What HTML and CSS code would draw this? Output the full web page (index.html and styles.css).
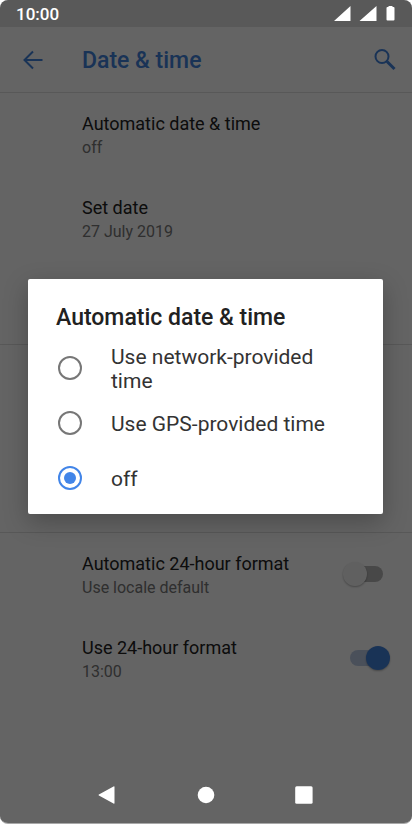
FILE: index.html
```html
<!DOCTYPE html>
<html lang="en">
<head>
<meta charset="utf-8">
<meta name="viewport" content="width=device-width, initial-scale=1">
<title>Date &amp; time</title>
<link rel="stylesheet" href="styles.css">
</head>
<body>
<div class="screen">
  <header class="status">
    <time class="clock">10:00</time>
    <svg class="signals" viewBox="0 0 62 16" aria-hidden="true">
      <path d="M0 15 16.500 0v15zM25.500 15 42.500 0v15z"/>
      <path d="M54.500 0h4v1h1q1 0 1 1v11.500q0 1-1 1h-6q-1 0-1-1V2q0-1 1-1h1z"/>
    </svg>
  </header>

  <main class="settings">
    <div class="appbar">
      <button class="icon-button" type="button" aria-label="Back">
        <svg class="icon" viewBox="0 0 24 24"><path d="M21.500 12H3.500M12 3.500 3.500 12l8.500 8.500"/></svg>
      </button>
      <h1 class="title">Date &amp; time</h1>
      <button class="icon-button" type="button" aria-label="Search">
        <svg class="icon" viewBox="0 0 24 24"><circle cx="9" cy="8.500" r="6.500"/><path class="handle" d="m14 13.500 7.500 7.500"/></svg>
      </button>
    </div>

    <section class="group group-first">
      <div class="row"><div class="text"><span class="name">Automatic date &amp; time</span><span class="value">off</span></div></div>
      <div class="row"><div class="text"><span class="name">Set date</span><span class="value">27 July 2019</span></div></div>
    </section>
    <section class="group group-zone"></section>
    <section class="group">
      <label class="row">
        <span class="text"><span class="name">Automatic 24-hour format</span><span class="value">Use locale default</span></span>
        <input class="switch" type="checkbox" role="switch">
      </label>
      <label class="row">
        <span class="text"><span class="name">Use 24-hour format</span><span class="value">13:00</span></span>
        <input class="switch" type="checkbox" role="switch" checked>
      </label>
    </section>
  </main>

  <nav class="navbar">
    <button class="nav-button" type="button" aria-label="Back"><svg viewBox="0 0 20 20"><path d="M16.500 2v16q0 1.200-1 .6L.9 10.600q-.9-.6 0-1.200L15.500 1.400q1-.6 1 .6z"/></svg></button>
    <button class="nav-button" type="button" aria-label="Home"><svg viewBox="0 0 20 20"><circle cx="10" cy="10" r="8.300"/></svg></button>
    <button class="nav-button" type="button" aria-label="Recent apps"><svg viewBox="0 0 20 20"><rect x="1.200" y="1.300" width="17.400" height="17.400" rx="1.500"/></svg></button>
  </nav>

  <div class="overlay">
    <form class="dialog" role="dialog" aria-labelledby="dialog-title">
      <h2 class="dialog-title" id="dialog-title">Automatic date &amp; time</h2>
      <label class="option"><input class="radio" type="radio" name="source"><span class="option-text">Use network-provided time</span></label>
      <label class="option"><input class="radio" type="radio" name="source"><span class="option-text">Use GPS-provided time</span></label>
      <label class="option"><input class="radio" type="radio" name="source" checked><span class="option-text">off</span></label>
    </form>
  </div>
</div>
</body>
</html>
```
FILE: styles.css
```css
* {
  box-sizing: border-box;
}

body {
  margin: 0;
  background: #fff;
  font-family: Roboto, sans-serif;
}

button {
  padding: 0;
  border: 0;
  background: none;
}

.screen {
  position: relative;
  display: flex;
  flex-direction: column;
  min-height: 100vh;
  overflow: hidden;
  border-bottom: 1px solid #a8a8a8;
  border-radius: 8px;
  background: #fafafa;
}

.status {
  display: flex;
  align-items: center;
  justify-content: space-between;
  height: 27px;
  padding: 0 16px;
  background: #dedede;
  color: #fff;
}

.clock {
  padding-top: 1px;
  font-size: 17px;
  font-weight: 500;
  line-height: 26px;
}

.signals {
  width: 62px;
  height: 16px;
  fill: #fff;
}

/* System indicators stay bright above the dimmed page. */
.clock,
.signals,
.navbar {
  position: relative;
  z-index: 2;
}

.settings {
  flex: 1;
}

.appbar {
  display: flex;
  align-items: center;
  height: 66px;
  padding: 1px 15px 0 21px;
  border-bottom: 1px solid #dcdcdc;
  color: #3f7fd8;
}

.icon-button {
  display: flex;
  color: inherit;
}

.icon {
  width: 24px;
  height: 24px;
  fill: none;
  stroke: currentColor;
  stroke-width: 2;
}

.handle {
  stroke-width: 3;
}

.title {
  flex: 1;
  margin: 0;
  padding: 2px 0 0 37px;
  font-size: 23px;
  font-weight: 500;
  line-height: 32px;
}

.group {
  border-bottom: 1px solid #dcdcdc;
}

.group:last-child {
  border-bottom: 0;
}

.group-first {
  min-height: 252px;
}

.group-zone {
  min-height: 188px;
}

.row {
  display: flex;
  align-items: center;
  justify-content: space-between;
  height: 84px;
  padding: 0 18px 0 82px;
}

.text {
  display: flex;
  flex-direction: column;
  padding-top: 2px;
}

.name {
  color: #212121;
  font-size: 18px;
  line-height: 24px;
}

.value {
  color: #757575;
  font-size: 16px;
  line-height: 24px;
}

.switch {
  position: relative;
  width: 52px;
  height: 26px;
  margin: 0;
  appearance: none;
}

.switch::before {
  content: "";
  position: absolute;
  inset: 4px 11px 6px 8px;
  border-radius: 8px;
  background: #b4b4b4;
}

.switch::after {
  content: "";
  position: absolute;
  top: 0;
  left: 1px;
  width: 24px;
  height: 24px;
  border-radius: 50%;
  background: #f1f1f1;
  box-shadow: 0 1px 2px rgba(0, 0, 0, 0.3);
}

.switch:checked::before {
  background: #b9c8e2;
}

.switch:checked::after {
  left: 24px;
  background: #3f7fd8;
}

.navbar {
  display: flex;
  align-items: center;
  justify-content: center;
  gap: 78px;
  height: 56px;
  padding-right: 1px;
}

.nav-button {
  display: flex;
}

.nav-button svg {
  width: 20px;
  height: 20px;
  fill: #fff;
}

.overlay {
  position: absolute;
  inset: 0;
  z-index: 1;
  display: flex;
  align-items: center;
  justify-content: center;
  padding: 27px 29px 57px 28px;
  background: rgba(0, 0, 0, 0.6);
}

.dialog {
  width: 100%;
  padding: 23px 28px 9px;
  border-radius: 2px;
  background: #fff;
  box-shadow: 0 8px 24px rgba(0, 0, 0, 0.25);
}

.dialog-title {
  margin: 0;
  padding-bottom: 6px;
  color: #212121;
  font-size: 23px;
  font-weight: 500;
  line-height: 32px;
}

.option {
  display: flex;
  align-items: center;
  gap: 29px;
  min-height: 55px;
  padding: 0 2px;
  color: #333;
  font-size: 21px;
  line-height: 24px;
}

.option-text {
  padding-top: 2px;
}

.radio {
  flex: none;
  display: grid;
  place-items: center;
  width: 24px;
  height: 24px;
  margin: 0;
  border: 2px solid #777;
  border-radius: 50%;
  appearance: none;
}

.radio:checked {
  border-color: #4285e8;
}

.radio:checked::before {
  content: "";
  width: 12px;
  height: 12px;
  border-radius: 50%;
  background: #4285e8;
}
```
